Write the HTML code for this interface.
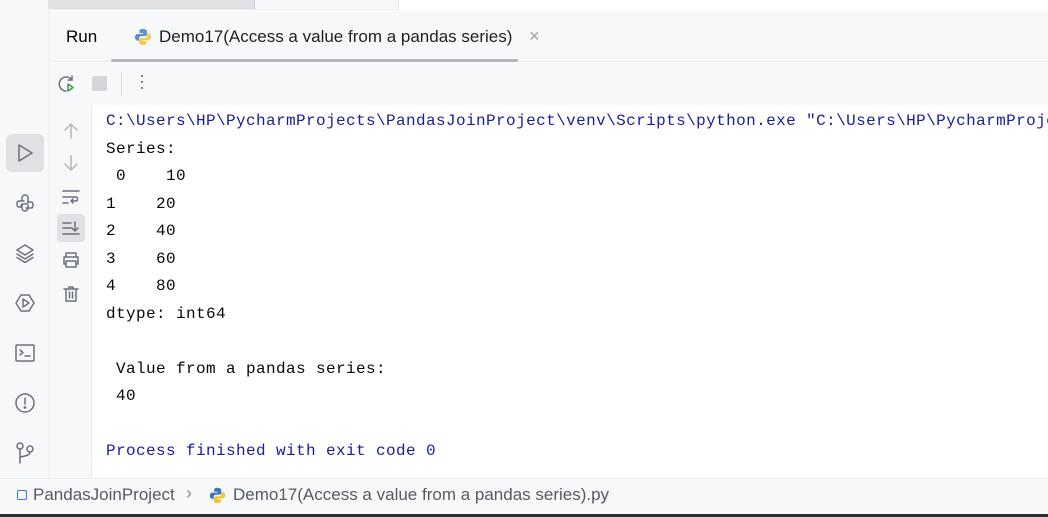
<!DOCTYPE html>
<html><head><meta charset="utf-8"><style>
*{margin:0;padding:0;box-sizing:border-box}
body{width:1048px;height:517px;overflow:hidden;background:#fff;position:relative;font-family:"Liberation Sans",sans-serif}
.abs{position:absolute}
.mono{font-family:"Liberation Mono",monospace;font-size:16px;letter-spacing:0.4px;white-space:pre;line-height:27.5px;overflow:hidden}
svg{position:absolute;fill:none;stroke:#6c707e;stroke-width:1.5;stroke-linecap:round;stroke-linejoin:round}
</style></head><body>
<div class="abs" style="left:0;top:0;width:50px;height:478px;background:#f7f8fa;border-right:1px solid #ebecf0"></div>
<div class="abs" style="left:51px;top:0;width:997px;height:10px;background:#f7f8fa;border-bottom:1px solid #ebecf0"></div>
<div class="abs" style="left:48px;top:0;width:207px;height:9px;background:#dfe1e5;border-right:1px solid #c9ccd6"></div>
<div class="abs" style="left:398px;top:0;width:650px;height:10px;background:#fff;border-left:1px solid #ebecf0"></div>
<div class="abs" style="left:51px;top:11px;width:997px;height:51px;background:#f7f8fa;border-bottom:1px solid #ebecf0"></div>
<div class="abs" style="left:66px;top:27px;font-size:17px;color:#000">Run</div>
<svg style="left:133px;top:27px" width="20" height="20" viewBox="0 0 20 20"><path d="M9.5 2c-3 0-3 1.3-3 2.5V6h3.5v1H4.5C3 7 2 8.3 2 10.3s1 3.3 2.5 3.3H6v-2c0-1.5 1.2-2.5 2.5-2.5h3.5c1.2 0 2-.9 2-2V4.5C14 3 12.5 2 9.5 2z" fill="#5b8fd6" stroke="none"/><path d="M10.5 18c3 0 3-1.3 3-2.5V14H10v-1h5.5c1.5 0 2.5-1.3 2.5-3.3s-1-3.3-2.5-3.3H14v2c0 1.5-1.2 2.5-2.5 2.5H8c-1.2 0-2 .9-2 2v2.6C6 17 7.5 18 10.5 18z" fill="#f5cd4a" stroke="none"/></svg>
<div class="abs" style="left:159px;top:27px;font-size:17px;color:#1e1f22">Demo17(Access a value from a pandas series)</div>
<div class="abs" style="left:529px;top:26px;font-size:18px;color:#a0a3ab">×</div>
<div class="abs" style="left:111px;top:59px;width:407px;height:3px;background:#b4b7c0;border-radius:2px"></div>
<div class="abs" style="left:51px;top:63px;width:997px;height:42px;background:#f7f8fa"></div>
<svg style="left:57px;top:74px" width="20" height="20" viewBox="0 0 20 20"><path d="M15 6A7 7 0 1 0 9 17"/><path d="M15 2v4h-4"/><path d="M11 10v7l5-3.5z" stroke="#3d9a50"/></svg>
<div class="abs" style="left:92px;top:76px;width:15px;height:15px;background:#d3d5db;border-radius:2px"></div>
<div class="abs" style="left:121px;top:72px;width:1px;height:24px;background:#dfe1e5"></div>
<div class="abs" style="left:139px;top:72px;font-size:18px;color:#6c707e;line-height:6px">·<br>·<br>·</div>
<div class="abs" style="left:51px;top:105px;width:41px;height:373px;background:#f7f8fa;border-right:1px solid #ebecf0"></div>
<div class="abs" style="left:6px;top:134px;width:38px;height:38px;background:#dfe1e5;border-radius:6px"></div>
<svg style="left:15px;top:143px" width="20" height="20" viewBox="0 0 20 20"><path d="M4 2l13 8-13 8z"/></svg>
<svg style="left:15px;top:193px" width="20" height="20" viewBox="0 0 20 20"><path d="M7 8V5c0-2 1.5-3 3-3s3 1 3 3v4c0 1-1 2-2 2H8c-1 0-2 1-2 2v1H4c-1.5 0-2-1.5-2-3s.5-3 2-3h5"/><path d="M13 12v3c0 2-1.5 3-3 3s-3-1-3-3v-4M14 9h2c1.5 0 2 1.5 2 3s-.5 3-2 3h-5"/></svg>
<svg style="left:15px;top:243px" width="20" height="20" viewBox="0 0 20 20"><path d="M10 2l8 5-8 5-8-5z"/><path d="M2 11l8 5 8-5"/><path d="M2 14.5l8 5 8-5"/></svg>
<svg style="left:14px;top:292px" width="22" height="22" viewBox="0 0 22 22"><path d="M7 3h8l5 8-5 8H7l-5-8z"/><path d="M9 7v8l6-4z"/></svg>
<svg style="left:14px;top:342px" width="22" height="22" viewBox="0 0 22 22"><rect x="2" y="3" width="18" height="16" rx="1"/><path d="M6 8l3 2.5-3 2.5M11 14h5"/></svg>
<svg style="left:14px;top:392px" width="22" height="22" viewBox="0 0 22 22"><circle cx="11" cy="11" r="9"/><path d="M11 6v6"/><circle cx="11" cy="15.5" r=".6"/></svg>
<svg style="left:15px;top:442px" width="20" height="22" viewBox="0 0 20 22"><circle cx="5" cy="4" r="3"/><circle cx="15" cy="7" r="3"/><path d="M5 7v14M15 10c0 3-4 4-10 5"/></svg>
<svg style="left:62px;top:122px;stroke:#b4b7c0" width="18" height="18" viewBox="0 0 18 18"><path d="M9 16V2M3 8l6-6 6 6"/></svg>
<svg style="left:62px;top:154px;stroke:#b4b7c0" width="18" height="18" viewBox="0 0 18 18"><path d="M9 2v14M3 10l6 6 6-6"/></svg>
<svg style="left:61px;top:187px" width="20" height="20" viewBox="0 0 20 20"><path d="M2 4h16M2 10h13c2 0 2 4 0 4h-5M12 12l-2 2 2 2M2 16h5"/></svg>
<div class="abs" style="left:57px;top:214px;width:28px;height:28px;background:#dfe1e5;border-radius:4px"></div>
<svg style="left:61px;top:218px" width="20" height="20" viewBox="0 0 20 20"><path d="M2 5h8M2 10h8M2 16h16M14 4v9M11 10l3 3 3-3"/></svg>
<svg style="left:61px;top:250px" width="20" height="20" viewBox="0 0 20 20"><path d="M5 7V3h10v4M3 7h14v7h-2M5 14H3V7M5 11h10v6H5z"/></svg>
<svg style="left:61px;top:284px" width="20" height="20" viewBox="0 0 20 20"><path d="M3 5h14M8 5V3h4v2M5 5v12h10V5M8.5 8v6M11.5 8v6"/></svg>
<div class="abs mono" style="left:106px;top:108px;width:942px;color:#080808"><span style="color:#1c1c9c">C:\Users\HP\PycharmProjects\PandasJoinProject\venv\Scripts\python.exe "C:\Users\HP\PycharmProjects\PandasJoinProject\Demo17.py"</span>
Series:
 0    10
1    20
2    40
3    60
4    80
dtype: int64

 Value from a pandas series:
 40

<span style="color:#1c1c9c">Process finished with exit code 0</span></div>
<div class="abs" style="left:0;top:478px;width:1048px;height:36px;background:#f7f8fa;border-top:1px solid #ebecf0"></div>
<div class="abs" style="left:17px;top:490px;width:10px;height:10px;border:1.5px solid #3574f0;border-radius:2px"></div>
<div class="abs" style="left:33px;top:485px;font-size:17px;color:#555a63">PandasJoinProject</div>
<div class="abs" style="left:186px;top:483px;font-size:18px;color:#8c8f98">›</div>
<svg style="left:208px;top:486px" width="19" height="19" viewBox="0 0 20 20"><path d="M9.5 2c-3 0-3 1.3-3 2.5V6h3.5v1H4.5C3 7 2 8.3 2 10.3s1 3.3 2.5 3.3H6v-2c0-1.5 1.2-2.5 2.5-2.5h3.5c1.2 0 2-.9 2-2V4.5C14 3 12.5 2 9.5 2z" fill="#3b76c2" stroke="none"/><path d="M10.5 18c3 0 3-1.3 3-2.5V14H10v-1h5.5c1.5 0 2.5-1.3 2.5-3.3s-1-3.3-2.5-3.3H14v2c0 1.5-1.2 2.5-2.5 2.5H8c-1.2 0-2 .9-2 2v2.6C6 17 7.5 18 10.5 18z" fill="#f2c230" stroke="none"/></svg>
<div class="abs" style="left:233px;top:485px;font-size:17px;color:#555a63">Demo17(Access a value from a pandas series).py</div>
<div class="abs" style="left:0;top:514px;width:1048px;height:3px;background:#2b2d30"></div>
</body></html>
